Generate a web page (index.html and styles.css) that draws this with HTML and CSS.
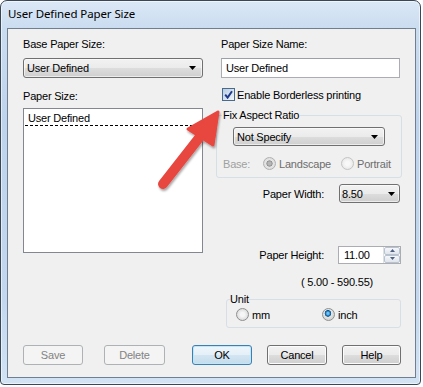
FILE: index.html
```html
<!DOCTYPE html>
<html>
<head>
<meta charset="utf-8">
<link rel="stylesheet" href="styles.css">
</head>
<body>
<div class="window">
  <div class="titlebar">User Defined Paper Size</div>
  <div class="client">
    <div class="cols">
      <div class="col-left">
        <div class="lbl">Base Paper Size:</div>
        <div class="combo combo-base"><span>User Defined</span><svg class="dd" width="7" height="4" viewBox="0 0 7 4"><path d="M0 0H7L3.5 4Z"/></svg></div>
        <div class="lbl lbl-list">Paper Size:</div>
        <div class="listbox"><div class="list-item">User Defined</div></div>
      </div>
      <div class="col-right">
        <div class="lbl lbl-name">Paper Size Name:</div>
        <div class="textbox">User Defined</div>
        <div class="check-row">
          <span class="checkbox"><svg width="9" height="9" viewBox="0 0 9 9"><path d="M1.2 4.6 L3.6 7.6 L8 1.2" fill="none" stroke="#1f3a8c" stroke-width="2"/></svg></span>
          <span>Enable Borderless printing</span>
        </div>
        <fieldset class="group group-aspect">
          <legend>Fix Aspect Ratio</legend>
          <div class="combo combo-aspect"><span>Not Specify</span><svg class="dd" width="7" height="4" viewBox="0 0 7 4"><path d="M0 0H7L3.5 4Z"/></svg></div>
          <div class="base-row">
            <span class="base-lbl">Base:</span>
            <span class="opt opt-landscape"><span class="radio radio-dis-checked"></span><span class="dis">Landscape</span></span>
            <span class="opt"><span class="radio radio-dis"></span><span class="dis">Portrait</span></span>
          </div>
        </fieldset>
        <div class="field-row row-width">
          <span class="field-lbl">Paper Width:</span>
          <div class="combo combo-small"><span>8.50</span><svg class="dd" width="7" height="4" viewBox="0 0 7 4"><path d="M0 0H7L3.5 4Z"/></svg></div>
        </div>
        <div class="field-row row-height">
          <span class="field-lbl lbl-height">Paper Height:</span>
          <div class="spinner"><span>11.00</span>
            <span class="spin">
              <span class="spin-btn"><svg width="5" height="3" viewBox="0 0 5 3"><path d="M0 3H5L2.5 0Z" fill="#4d6185"/></svg></span>
              <span class="spin-btn"><svg width="5" height="3" viewBox="0 0 5 3"><path d="M0 0H5L2.5 3Z" fill="#4d6185"/></svg></span>
            </span>
          </div>
        </div>
        <div class="range">( 5.00 - 590.55)</div>
        <fieldset class="group group-unit">
          <legend>Unit</legend>
          <div class="unit-row">
            <span class="opt opt-mm"><span class="radio"></span><span>mm</span></span>
            <span class="opt"><span class="radio radio-checked"></span><span>inch</span></span>
          </div>
        </fieldset>
      </div>
    </div>
    <div class="buttons">
      <div class="btn disabled">Save</div>
      <div class="btn disabled btn-delete">Delete</div>
      <div class="btn btn-ok">OK</div>
      <div class="btn btn-cancel">Cancel</div>
      <div class="btn btn-help">Help</div>
    </div>
  </div>
  <svg class="arrow" width="100" height="110" viewBox="140 90 100 110">
    <defs>
      <filter id="sh" x="-20%" y="-20%" width="150%" height="150%">
        <feDropShadow dx="1" dy="2" stdDeviation="1.2" flood-color="#000" flood-opacity="0.35"/>
      </filter>
    </defs>
    <g filter="url(#sh)" fill="#e8463f" stroke="#e8463f" stroke-linejoin="round" stroke-linecap="round">
      <line x1="163" y1="184" x2="199" y2="138" stroke-width="10"/>
      <polygon points="218,112 188,129 213,145" stroke-width="3"/>
    </g>
  </svg>
</div>
</body>
</html>
```

FILE: styles.css
```css
* { box-sizing: border-box; }
html, body { margin: 0; padding: 0; }
body {
  background: #ffffff;
  font-family: "Liberation Sans", Arial, sans-serif;
  font-size: 11px;
  letter-spacing: -0.2px;
  color: #000;
}

.window {
  position: relative;
  width: 421px;
  height: 385px;
  border: 1px solid #3a4756;
  border-radius: 7px 7px 4px 4px;
  background: linear-gradient(180deg, #dbe8f6 0px, #cadcf0 28px, #bed4ec 120px, #c3d8ef 300px, #d2e3f4 385px);
  padding: 0 4px 6px 6px;
  display: flex;
  flex-direction: column;
  box-shadow: inset 0 0 0 1px rgba(255,255,255,0.55);
}

.titlebar {
  height: 27px;
  flex: none;
  display: flex;
  align-items: center;
  padding: 0 0 2px 1px;
  font-family: "Noto Sans", "Open Sans", sans-serif;
  font-size: 11.5px;
  letter-spacing: -0.1px;
  color: #000;
}

.client {
  flex: 1;
  background: #f0f0f0;
  border: 1px solid #6f7f90;
  padding: 8px 0 0 15px;
  display: flex;
  flex-direction: column;
}

.cols { display: flex; gap: 13px; align-items: flex-start; }
.col-left { width: 180px; display: flex; flex-direction: column; }
.col-right { width: 186px; display: flex; flex-direction: column; }

.lbl { height: 14px; line-height: 14px; white-space: nowrap; }
.lbl-list { margin-top: 11px; }
.lbl-name { padding-left: 5px; }

.combo {
  height: 20px;
  border: 1px solid #707070;
  border-radius: 3px;
  background: linear-gradient(180deg, #f2f2f2 0%, #ebebeb 50%, #dddddd 51%, #cfcfcf 100%);
  box-shadow: inset 0 0 0 1px rgba(255,255,255,0.6);
  display: flex;
  align-items: center;
  justify-content: space-between;
  padding: 0 6px 0 3px;
  white-space: nowrap;
}
.combo-base { margin-top: 7px; }
.dd { display: block; fill: #000; }

.listbox {
  margin-top: 5px;
  height: 145px;
  background: #fff;
  border: 1px solid #828790;
  padding: 0 1px;
}
.list-item {
  height: 17px;
  line-height: 14px;
  padding: 2px 0 0 3px;
  background: repeating-linear-gradient(90deg, #000 0 3px, transparent 3px 5px) left bottom / 100% 1px no-repeat;
}

.textbox {
  margin: 7px 0 0 5px;
  width: 179px;
  height: 20px;
  background: #fff;
  border: 1px solid #abadb3;
  border-top-color: #9aa0a8;
  padding-left: 4px;
  line-height: 18px;
}

.check-row {
  margin-top: 10px;
  height: 13px;
  display: flex;
  align-items: center;
  gap: 2px;
  padding-left: 6px;
  white-space: nowrap;
}
.checkbox {
  width: 13px;
  height: 13px;
  flex: none;
  border: 1px solid #4a6a8c;
  background: linear-gradient(135deg, #b9cde3, #f0f5fa);
  display: flex;
  align-items: center;
  justify-content: center;
}
.checkbox svg { display: block; }

.group {
  margin: 0;
  min-width: 0;
  border: 1px solid #d5dfe5;
  border-radius: 3px;
}
.group legend { padding: 0 1px; line-height: 14px; height: 14px; }

.group-aspect { margin-top: 7px; padding: 0 0 7px 5px; }
.combo-aspect { margin: 5px 0 0 11px; width: 152px; height: 19px; }
.base-row {
  margin: 11px 0 0 1px;
  height: 13px;
  display: flex;
  align-items: center;
  white-space: nowrap;
}
.base-lbl { width: 40px; color: #a0a0a0; }
.opt { display: flex; align-items: center; gap: 3px; }
.opt-landscape { width: 78px; }
.dis { color: #6d6d6d; }

.radio {
  width: 13px;
  height: 13px;
  flex: none;
  border-radius: 50%;
  border: 1px solid #8e8f8f;
  background: radial-gradient(circle at 50% 50%, #f6f6f6 0 2px, #d9d9d9 6px);
}
.radio-dis { border-color: #c4c4c4; background: radial-gradient(circle, #f8f8f8 0 2px, #e8e8e8 6px); }
.radio-dis-checked {
  border-color: #b0b0b0;
  background: radial-gradient(circle, #b6b6b6 0 1.6px, #8e8e8e 2.8px, #e6e6e6 3.4px, #dcdcdc 6px);
}
.radio-checked {
  background: radial-gradient(circle at 45% 40%, #6fc3f3 0 1px, #1f7fc4 2.2px, #0d4f86 3px, #e6e6e6 3.6px, #d6d6d6 6px);
}

.field-row { display: flex; align-items: center; height: 19px; }
.row-width { margin-top: 6px; }
.row-height { margin-top: 42px; }
.field-lbl { flex: 1; text-align: right; padding-right: 15px; white-space: nowrap; }
.lbl-height { padding-right: 14px; }
.combo-small { width: 61px; height: 19px; margin-right: 2px; padding: 0 4px 0 2px; }

.spinner {
  width: 63px;
  height: 18px;
  margin-right: 1px;
  background: #fff;
  border: 1px solid #abadb3;
  display: flex;
  align-items: center;
  justify-content: space-between;
  padding: 0 0 0 5px;
}
.spin {
  width: 17px;
  height: 16px;
  display: flex;
  flex-direction: column;
  border-left: 1px solid #dde1e6;
}
.spin-btn {
  flex: 1;
  display: flex;
  align-items: center;
  justify-content: center;
  background: linear-gradient(180deg, #f5f7fa, #dfe5ec);
  border: 1px solid #b9c3cf;
  border-radius: 2px;
}
.spin-btn svg { display: block; }

.range { margin-top: 11px; height: 14px; line-height: 14px; padding-left: 85px; white-space: nowrap; }

.group-unit { margin: 3px 0 0 10px; width: 175px; padding: 0 0 6px 3px; }
.group-unit legend { padding: 0; }
.unit-row { margin-top: 2px; height: 13px; display: flex; align-items: center; }
.opt-mm { width: 86px; margin-left: 6px; }

.buttons { margin-top: 17px; display: flex; height: 20px; }
.btn {
  width: 60px;
  height: 20px;
  border: 1px solid #707070;
  border-radius: 3px;
  background: linear-gradient(180deg, #f2f2f2 0%, #ebebeb 50%, #dddddd 51%, #cfcfcf 100%);
  box-shadow: inset 0 0 0 1px #fcfcfc;
  display: flex;
  align-items: center;
  justify-content: center;
}
.btn.disabled { border-color: #adb2b5; background: #f4f4f4; color: #838383; box-shadow: none; }
.btn-delete { margin-left: 21px; width: 61px; }
.btn-ok {
  margin-left: 27px;
  border-color: #3c7fb1;
  box-shadow: inset 0 0 0 1px #bfe6fb;
  background: linear-gradient(180deg, #eef6fb 0%, #e4eff7 50%, #d3e5f1 51%, #c4dcec 100%);
}
.btn-cancel { margin-left: 15px; }
.btn-help { margin-left: 15px; width: 59px; }

.arrow {
  position: absolute;
  left: 139px;
  top: 89px;
  overflow: visible;
}
```
